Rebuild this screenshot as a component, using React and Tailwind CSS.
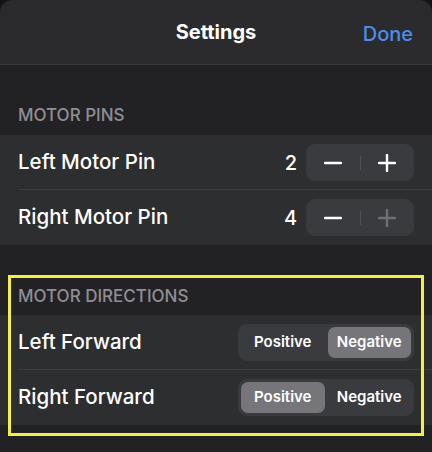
const font = { fontFamily: "Inter, 'Noto Sans', sans-serif" };

function Minus({ className }) {
  return (
    <svg className={className} width="18" height="18" viewBox="0 0 18 18">
      <path d="M1 9h16" stroke="currentColor" strokeWidth="2.4" strokeLinecap="round" />
    </svg>
  );
}

function Plus({ className }) {
  return (
    <svg className={className} width="18" height="18" viewBox="0 0 18 18">
      <path d="M1 9h16M9 1v16" stroke="currentColor" strokeWidth="2.4" strokeLinecap="round" />
    </svg>
  );
}

function Stepper({ plusDisabled }) {
  return (
    <div className="flex items-center w-[108px] h-[37px] rounded-[9px] bg-[#3a3b3e]">
      <div className="flex-1 flex items-center justify-center text-white">
        <Minus />
      </div>
      <div className="w-px h-[14px] bg-[#505154]" />
      <div
        className={`flex-1 flex items-center justify-center ${
          plusDisabled ? "text-[#6f7074]" : "text-white"
        }`}
      >
        <Plus />
      </div>
    </div>
  );
}

function Segmented({ value }) {
  const item = (label) =>
    value === label
      ? "bg-[#75757a] text-white"
      : "text-white";
  return (
    <div className="flex w-[176px] h-[37px] rounded-[9px] bg-[#3a3b3e] p-[3px] gap-[3px]">
      <div
        className={`flex-1 flex items-center justify-center rounded-[7px] text-[15px] font-semibold ${item("Positive")}`}
      >
        Positive
      </div>
      <div
        className={`flex-1 flex items-center justify-center rounded-[7px] text-[15px] font-semibold ${item("Negative")}`}
      >
        Negative
      </div>
    </div>
  );
}

function Row({ label, children, divider }) {
  return (
    <div className="relative h-[55px] flex items-center justify-between pl-[18px] pr-[18px]">
      <span className="text-[20.5px] font-medium text-white">{label}</span>
      {children}
      {divider && (
        <div className="absolute bottom-0 left-[18px] right-0 h-px bg-[#3b3c3f]" />
      )}
    </div>
  );
}

export default function App() {
  return (
    <div className="w-[432px] h-[452px] bg-[#141414] overflow-hidden" style={font}>
      <div className="h-full rounded-t-[13px] bg-[#222224] overflow-hidden">
        {/* Nav bar */}
        <div className="relative h-[65px] bg-[#2b2b2d] border-b border-[#3a3a3c] flex items-center justify-center">
          <span className="text-[20px] font-bold text-white">Settings</span>
          <span className="absolute right-[19px] top-[19px] text-[20px] font-medium text-[#4b8eea]">
            Done
          </span>
        </div>

        {/* Motor pins */}
        <div className="pt-[41px]">
          <div className="px-[18px] h-[20px] mb-[9px] flex items-center text-[17px] font-medium text-[#8f8f94]">
            MOTOR PINS
          </div>
          <div className="bg-[#2d2e30]">
            <Row label="Left Motor Pin" divider>
              <div className="flex items-center gap-[9px]">
                <span className="text-[20px] font-medium text-white">2</span>
                <Stepper />
              </div>
            </Row>
            <Row label="Right Motor Pin">
              <div className="flex items-center gap-[9px]">
                <span className="text-[20px] font-medium text-white">4</span>
                <Stepper plusDisabled />
              </div>
            </Row>
          </div>
        </div>

        {/* Motor directions */}
        <div className="relative pt-[42px]">
          <div className="px-[18px] h-[20px] mb-[8px] flex items-center text-[17px] font-medium text-[#8f8f94]">
            MOTOR DIRECTIONS
          </div>
          <div className="bg-[#2d2e30]">
            <Row label="Left Forward" divider>
              <Segmented value="Negative" />
            </Row>
            <Row label="Right Forward">
              <Segmented value="Positive" />
            </Row>
          </div>
          <div className="absolute left-[8px] right-[8px] top-[30px] h-[161px] border-[3px] border-[#f3ef45]" />
        </div>
      </div>
    </div>
  );
}
